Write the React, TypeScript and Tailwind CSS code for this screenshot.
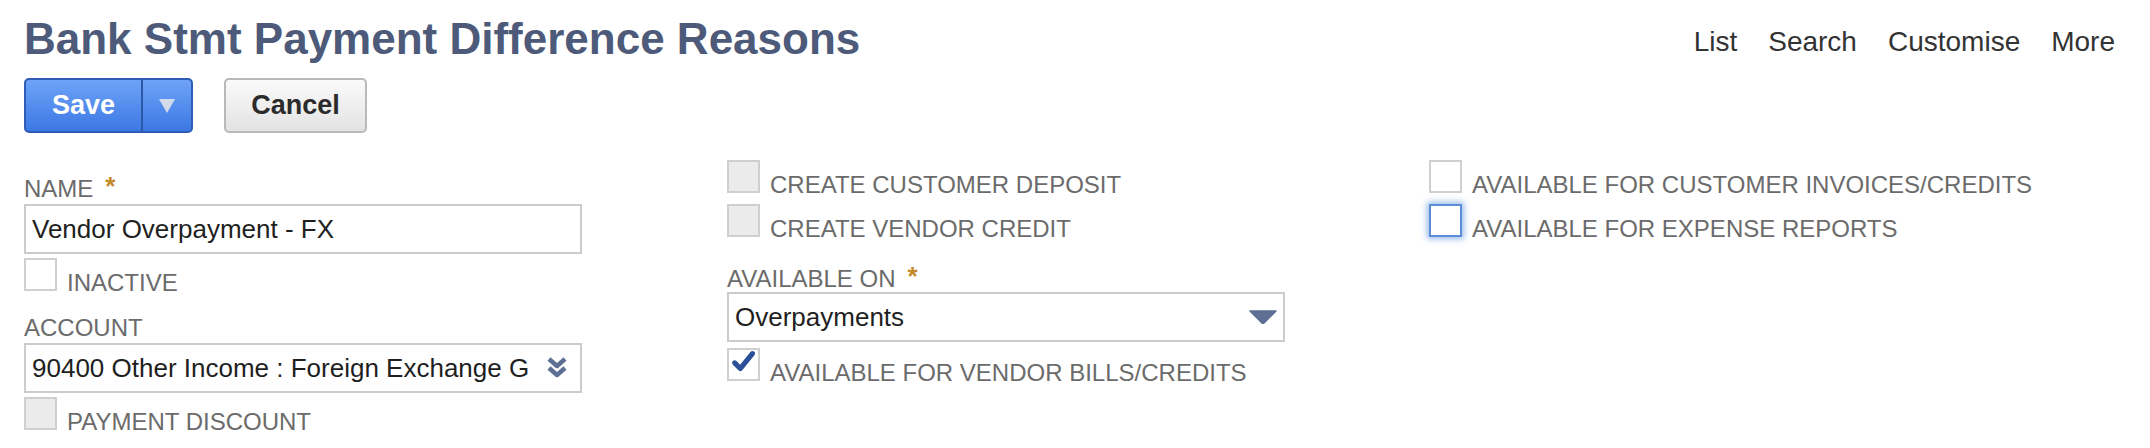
import React from 'react'

const label = 'text-[24px] leading-[26px] text-[#6b6b6b] uppercase'

function Box({ kind }: { kind: 'gray' | 'white' | 'focus' | 'checked' }) {
    const base = 'relative w-[33px] h-[33px] shrink-0 border-2'
    if (kind === 'gray') return <div className={`${base} bg-[#ebebeb] border-[#cfcfcf]`} />
    if (kind === 'focus')
        return <div className={`${base} bg-white border-[#5b8ed6] shadow-[0_0_6px_2px_rgba(120,165,230,0.75)]`} />
    if (kind === 'checked')
        return (
            <div className={`${base} bg-white border-[#cfcfcf]`}>
                <svg viewBox="0 0 30 30" className="absolute left-[1px] top-[-2px] w-[28px] h-[28px]">
                    <path d="M5 16 L11 22 L24 6" fill="none" stroke="#2b4f98" strokeWidth="5.5" strokeLinecap="round" strokeLinejoin="round" />
                </svg>
            </div>
        )
    return <div className={`${base} bg-white border-[#cfcfcf]`} />
}

function CheckRow({ kind, text }: { kind: 'gray' | 'white' | 'focus' | 'checked'; text: string }) {
    return (
        <div className="flex items-start gap-[10px] h-[38px]">
            <Box kind={kind} />
            <span className={`${label} pt-[12px] whitespace-nowrap`}>{text}</span>
        </div>
    )
}

function Label({ text, required, pt }: { text: string; required?: boolean; pt: string }) {
    return (
        <div className={`${label} ${pt} flex`}>
            <span>{text}</span>
            {required && <span className="ml-[12px] text-[#c48a2c] text-[26px] leading-[20px] font-bold">*</span>}
        </div>
    )
}

function Field({ children }: { children: React.ReactNode }) {
    return (
        <div className="h-[50px] border-2 border-[#cccccc] bg-white flex items-center pl-[6px] pr-[12px] text-[26px] text-[#1f1f1f]">
            {children}
        </div>
    )
}

export default function App() {
    return (
        <div className="w-[2150px] h-[448px] bg-white overflow-hidden font-['Liberation_Sans',Arial,sans-serif] pl-[24px]">
            {/* title + nav */}
            <div className="flex justify-between items-start pt-[14px] pr-[35px]">
                <h1 className="text-[44px] leading-[50px] font-bold text-[#4d5a79]">Bank Stmt Payment Difference Reasons</h1>
                <div className="flex gap-[31px] mt-[12px] text-[28px] leading-[32px] text-[#333333]">
                    <span>List</span>
                    <span>Search</span>
                    <span>Customise</span>
                    <span>More</span>
                </div>
            </div>

            {/* buttons */}
            <div className="flex gap-[31px] mt-[14px]">
                <div className="flex h-[55px] rounded-[5px] border-2 border-[#2f5db6] bg-gradient-to-b from-[#6ea3f7] to-[#3c78e4] overflow-hidden">
                    <div className="w-[115px] flex items-center justify-center text-white font-bold text-[27px]">Save</div>
                    <div className="w-[2px] bg-[#2c56a6]" />
                    <div className="w-[48px] flex items-center justify-center">
                        <svg viewBox="0 0 16 14" className="w-[16px] h-[14px]">
                            <path d="M0 0 H16 L8 14 Z" fill="#d3dbea" />
                        </svg>
                    </div>
                </div>
                <div className="w-[143px] h-[55px] rounded-[5px] border-2 border-[#b9b9b9] bg-gradient-to-b from-[#fafafa] to-[#e3e3e3] flex items-center justify-center font-bold text-[27px] text-[#2b2b2b]">
                    Cancel
                </div>
            </div>

            {/* form */}
            <div className="flex mt-[27px]">
                <div className="w-[558px] flex flex-col">
                    <Label text="Name" required pt="pt-[16px]" />
                    <div className="mt-[2px]">
                        <Field>Vendor Overpayment - FX</Field>
                    </div>
                    <div className="mt-[4px]">
                        <CheckRow kind="white" text="Inactive" />
                    </div>
                    <Label text="Account" pt="pt-[19px]" />
                    <div className="mt-[2px]">
                        <Field>
                            <span className="flex-1 whitespace-nowrap overflow-hidden">90400 Other Income : Foreign Exchange G</span>
                            <svg viewBox="0 0 22 24" className="w-[22px] h-[24px] ml-[8px]">
                                <path d="M3 3 L11 10 L19 3" fill="none" stroke="#5d6f92" strokeWidth="4.5" strokeLinejoin="round" />
                                <path d="M3 12 L11 19 L19 12" fill="none" stroke="#5d6f92" strokeWidth="4.5" strokeLinejoin="round" />
                            </svg>
                        </Field>
                    </div>
                    <div className="mt-[4px]">
                        <CheckRow kind="gray" text="Payment Discount" />
                    </div>
                </div>

                <div className="w-[558px] ml-[145px] flex flex-col">
                    <CheckRow kind="gray" text="Create Customer Deposit" />
                    <div className="mt-[6px]">
                        <CheckRow kind="gray" text="Create Vendor Credit" />
                    </div>
                    <Label text="Available On" required pt="pt-[24px]" />
                    <Field>
                        <span className="flex-1">Overpayments</span>
                        <svg viewBox="0 0 28 14" className="w-[28px] h-[14px] mr-[-6px]">
                            <path d="M1 1 H27 L15 13 Q14 14 13 13 Z" fill="#5d6f92" stroke="#5d6f92" strokeWidth="1.5" strokeLinejoin="round" />
                        </svg>
                    </Field>
                    <div className="mt-[6px]">
                        <CheckRow kind="checked" text="Available for Vendor Bills/Credits" />
                    </div>
                </div>

                <div className="ml-[144px] flex flex-col">
                    <CheckRow kind="white" text="Available for Customer Invoices/Credits" />
                    <div className="mt-[6px]">
                        <CheckRow kind="focus" text="Available for Expense Reports" />
                    </div>
                </div>
            </div>
        </div>
    )
}
